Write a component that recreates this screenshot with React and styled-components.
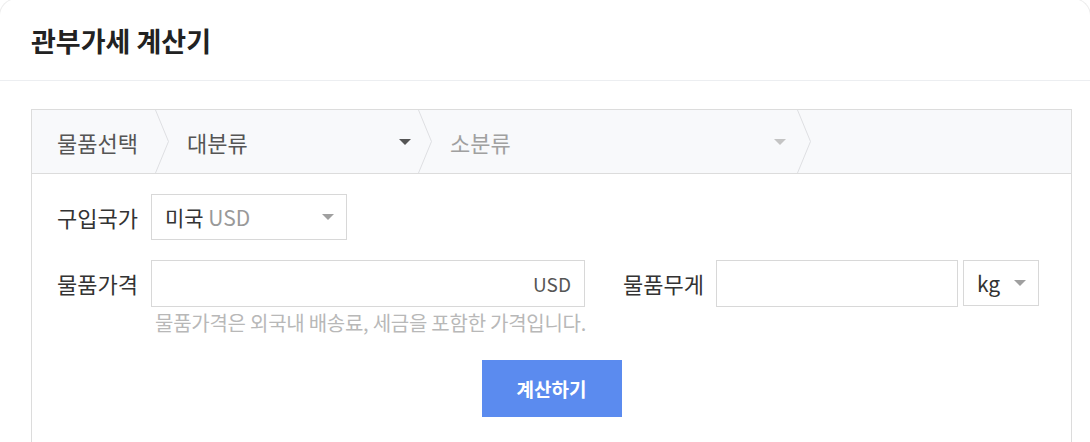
import React from 'react'
import styled, { createGlobalStyle } from 'styled-components'

const GlobalStyle = createGlobalStyle`
  body {
    margin: 0;
    background: #fff;
    font-family: "Noto Sans CJK KR", "Noto Sans", sans-serif;
    color: #333;
    overflow: hidden;
  }
`

const Card = styled.div`
  box-sizing: border-box;
  width: 1092px;
  height: 446px;
  margin: -2px 0 0 -1px;
  border: 1px solid #ededed;
  border-bottom: none;
  border-radius: 18px 18px 0 0;
  overflow: hidden;
`

const Header = styled.div`
  height: 81px;
  border-bottom: 1px solid #eceef1;
  display: flex;
  align-items: center;
  padding-left: 31px;
`

const Title = styled.h1`
  margin: 2px 0 0;
  font-size: 27px;
  font-weight: 700;
  color: #222;
`

const Body = styled.div`
  padding: 28px 0 0 31px;
`

const Box = styled.div`
  box-sizing: border-box;
  width: 1041px;
  height: 340px;
  border: 1px solid #dcdcdc;
  border-bottom: none;
`

const Crumbs = styled.div`
  height: 63px;
  background: #f8f9fb;
  border-bottom: 1px solid #dcdcdc;
  display: flex;
  align-items: stretch;
`

const Crumb = styled.div`
  box-sizing: border-box;
  width: ${p => p.$w}px;
  padding: 0 ${p => p.$pr}px 0 ${p => p.$pl}px;
  display: flex;
  align-items: center;
  justify-content: space-between;
  font-size: 22px;
  color: ${p => (p.$muted ? '#a0a0a0' : '#555')};
`

const Caret = styled.span`
  width: 0;
  height: 0;
  border-left: 6px solid transparent;
  border-right: 6px solid transparent;
  border-top: 6px solid ${p => p.$color};
`

const Sep = styled.svg`
  flex: none;
  display: block;
`

const Chevron = () => (
  <Sep width="14" height="63" viewBox="0 0 14 63">
    <path d="M0.5 0 L13.5 31.5 L0.5 63" fill="none" stroke="#dedfe2" strokeWidth="1" />
  </Sep>
)

const Form = styled.div`
  padding: 20px 0 0 25px;
`

const Row = styled.div`
  display: flex;
  align-items: flex-start;
  margin-bottom: ${p => p.$mb || 0}px;
`

const Label = styled.label`
  box-sizing: border-box;
  width: ${p => p.$w}px;
  padding-left: ${p => p.$pl || 0}px;
  flex: none;
  height: 46px;
  display: flex;
  align-items: center;
  font-size: 22px;
  color: #333;
`

const Field = styled.div`
  flex: none;
  display: flex;
  flex-direction: column;
  width: 434px;
`

const Select = styled.div`
  box-sizing: border-box;
  flex: none;
  width: ${p => p.$w}px;
  height: 46px;
  margin-left: ${p => p.$ml || 0}px;
  border: 1px solid #d8d8d8;
  background: #fff;
  display: flex;
  align-items: center;
  justify-content: space-between;
  padding: 0 12px 0 13px;
  font-size: 21px;
  color: #333;
`

const Muted = styled.span`
  color: #999;
`

const Input = styled.div`
  box-sizing: border-box;
  flex: none;
  width: ${p => p.$w}px;
  height: 47px;
  border: 1px solid #d8d8d8;
  display: flex;
  align-items: center;
  justify-content: flex-end;
  padding-right: 13px;
  font-size: 19px;
  color: #555;
`

const Help = styled.p`
  margin: 3px 0 0 4px;
  font-size: 20px;
  line-height: 26px;
  color: #b8b8b8;
  letter-spacing: -0.25px;
  white-space: nowrap;
`

const Actions = styled.div`
  display: flex;
  justify-content: center;
  margin-left: -25px;
  padding-top: 24px;
`

const Button = styled.button`
  width: 140px;
  height: 57px;
  border: none;
  background: #5b8bef;
  color: #fff;
  font-family: inherit;
  font-size: 19px;
  font-weight: 700;
`

export default function App() {
  return (
    <>
      <GlobalStyle />
      <Card>
        <Header>
          <Title>관부가세 계산기</Title>
        </Header>
        <Body>
          <Box>
            <Crumbs>
              <Crumb $w={123} $pl={25} $pr={0}>물품선택</Crumb>
              <Chevron />
              <Crumb $w={249} $pl={18} $pr={7}>
                대분류
                <Caret $color="#555" />
              </Crumb>
              <Chevron />
              <Crumb $w={365} $pl={18} $pr={11} $muted>
                소분류
                <Caret $color="#c4c4c4" />
              </Crumb>
              <Chevron />
            </Crumbs>
            <Form>
              <Row $mb={20}>
                <Label $w={94}>구입국가</Label>
                <Select $w={196}>
                  <span>
                    미국 <Muted>USD</Muted>
                  </span>
                  <Caret $color="#a0a0a0" />
                </Select>
              </Row>
              <Row>
                <Label $w={94}>물품가격</Label>
                <Field>
                  <Input $w={434}>USD</Input>
                  <Help>물품가격은 외국내 배송료, 세금을 포함한 가격입니다.</Help>
                </Field>
                <Label $w={131} $pl={38}>물품무게</Label>
                <Input $w={242} />
                <Select $w={76} $ml={5}>
                  <span>kg</span>
                  <Caret $color="#a0a0a0" />
                </Select>
              </Row>
              <Actions>
                <Button>계산하기</Button>
              </Actions>
            </Form>
          </Box>
        </Body>
      </Card>
    </>
  )
}
